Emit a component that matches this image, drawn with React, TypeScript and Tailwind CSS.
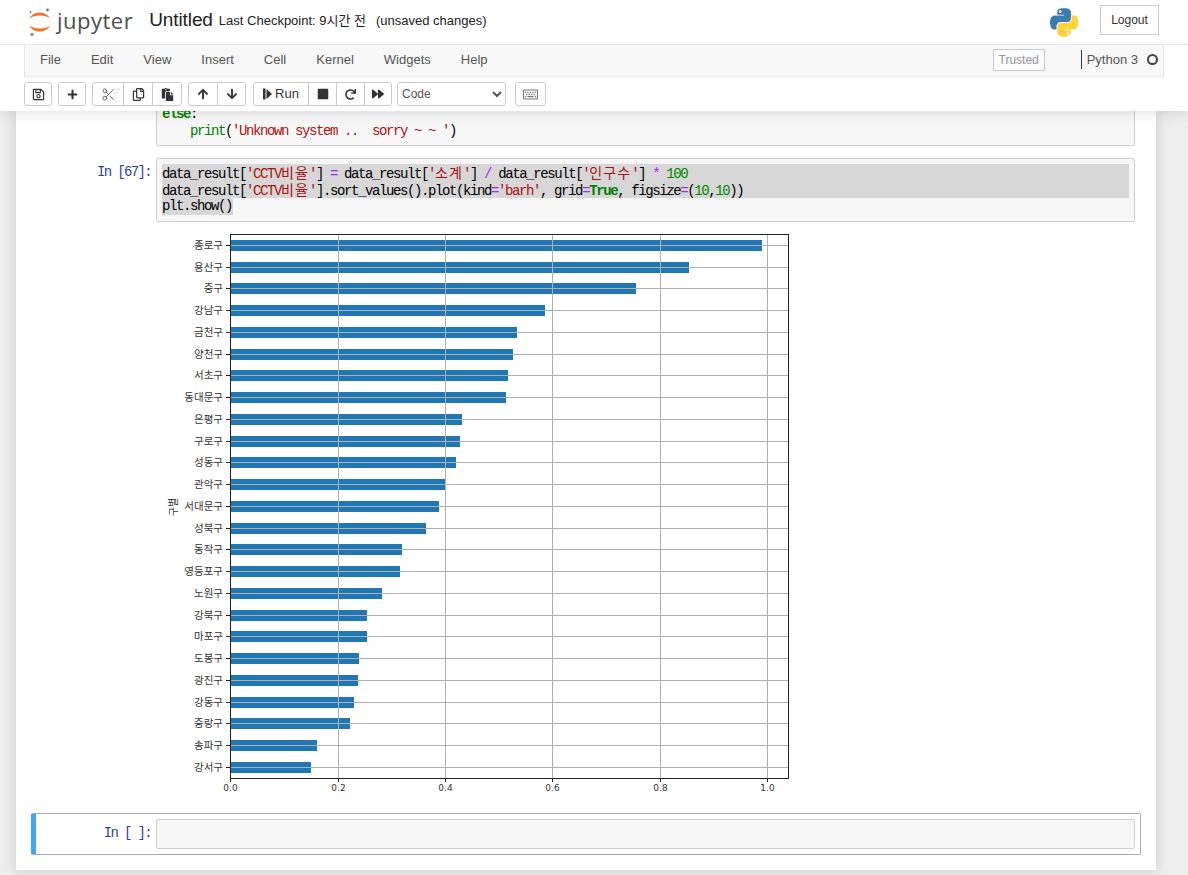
import type { ReactNode } from "react";
import { Scissors } from "lucide-react";
import {
  FaArrowDown,
  FaArrowUp,
  FaForward,
  FaPaste,
  FaPlus,
  FaRedo,
  FaRegCopy,
  FaRegKeyboard,
  FaRegSave,
  FaStop,
} from "react-icons/fa";

const menus = ["File", "Edit", "View", "Insert", "Cell", "Kernel", "Widgets", "Help"];

const bars: [string, number][] = [
  ["종로구", 762],
  ["용산구", 689],
  ["중구", 636],
  ["강남구", 545],
  ["금천구", 517],
  ["양천구", 513],
  ["서초구", 508],
  ["동대문구", 506],
  ["은평구", 462],
  ["구로구", 460],
  ["성동구", 456],
  ["관악구", 446],
  ["서대문구", 439],
  ["성북구", 426],
  ["동작구", 402],
  ["영등포구", 400],
  ["노원구", 382],
  ["강북구", 367],
  ["마포구", 367],
  ["도봉구", 359],
  ["광진구", 358],
  ["강동구", 354],
  ["중랑구", 350],
  ["송파구", 317],
  ["강서구", 311],
];

const xTicks: [string, number][] = [
  ["0.0", 230],
  ["0.2", 338],
  ["0.4", 445],
  ["0.6", 552],
  ["0.8", 660],
  ["1.0", 767],
];

const Ko = ({ children }: { children: ReactNode }) => (
  <span className="text-[14px] tracking-[1.1px] font-['Noto_Sans_CJK_KR',sans-serif]">{children}</span>
);
const Str = ({ children }: { children: ReactNode }) => <span className="text-[#aa1111]">{children}</span>;
const Op = ({ children }: { children: ReactNode }) => <span className="text-[#aa22ff]">{children}</span>;
const Num = ({ children }: { children: ReactNode }) => <span className="text-[#008800]">{children}</span>;

const Btn = ({ children, className = "" }: { children: ReactNode; className?: string }) => (
  <div
    className={`h-full flex items-center justify-center border-l border-[#cccccc] first:border-l-0 text-[#333333] ${className}`}
  >
    {children}
  </div>
);

const Group = ({ children, className = "" }: { children: ReactNode; className?: string }) => (
  <div className={`flex h-[24px] bg-white border border-[#cccccc] rounded-[3px] ${className}`}>{children}</div>
);

const JupyterLogo = () => (
  <svg width="24" height="30" viewBox="0 0 24 30" className="block">
    <path d="M1.5 11.5 C5 3.5 18 3.5 22 11.5 C18 7.5 6 7.5 1.5 11.5 Z" fill="#f37726" />
    <path d="M1.5 18.5 C5 26.5 18 26.5 22 18.5 C18 22.5 6 22.5 1.5 18.5 Z" fill="#f37726" />
    <circle cx="19.5" cy="3" r="1.4" fill="#767677" />
    <circle cx="2.5" cy="5" r="0.9" fill="#767677" />
    <circle cx="4" cy="27.5" r="1.8" fill="#989798" />
  </svg>
);

const PythonLogo = () => (
  <svg width="28" height="29" viewBox="0 0 110 112" className="block">
    <path
      fill="#3b7bb0"
      d="M54.919 0.001c-4.584.022-8.961.413-12.813 1.095C30.76 3.099 28.7 7.295 28.7 15.032v10.219h26.813v3.406H18.638c-7.793 0-14.616 4.684-16.75 13.594-2.462 10.213-2.571 16.586 0 27.25 1.906 7.938 6.457 13.594 14.25 13.594h9.219v-12.25c0-8.85 7.657-16.656 16.75-16.656h26.781c7.454 0 13.406-6.138 13.406-13.625V15.032c0-7.266-6.13-12.725-13.406-13.937C64.282.328 59.502-.02 54.918.001zM40.419 8.22c2.77 0 5.031 2.299 5.031 5.125 0 2.816-2.262 5.094-5.031 5.094-2.78 0-5.031-2.278-5.031-5.094 0-2.826 2.252-5.125 5.031-5.125z"
    />
    <path
      fill="#ffd43b"
      d="M85.638 28.657v11.906c0 9.231-7.826 17-16.75 17H42.106c-7.336 0-13.406 6.278-13.406 13.625v25.531c0 7.266 6.319 11.54 13.406 13.625 8.487 2.496 16.626 2.947 26.781 0 6.75-1.954 13.406-5.888 13.406-13.625V86.501H55.513v-3.406h40.188c7.793 0 10.696-5.436 13.406-13.594 2.799-8.399 2.68-16.476 0-27.25-1.926-7.757-5.604-13.594-13.406-13.594zM70.575 93.313c2.78 0 5.031 2.278 5.031 5.094 0 2.826-2.252 5.125-5.031 5.125-2.77 0-5.031-2.299-5.031-5.125 0-2.816 2.262-5.094 5.031-5.094z"
    />
  </svg>
);

const StepIcon = () => (
  <svg width="9" height="12" viewBox="0 0 9 12" className="block">
    <rect x="0" y="0.5" width="2.5" height="11" fill="#333333" />
    <path d="M3.5 1 L9 6 L3.5 11 Z" fill="#333333" />
  </svg>
);

const Chart = () => (
  <svg width="640" height="585" viewBox="156 222 640 585" className="block">
    {bars.map(([name, end], i) => {
      const y = Math.round(245 + i * 21.74);
      return (
        <g key={name}>
          <rect x="230" y={y - 5} width={end - 230} height="11" fill="#1f77b4" />
          <line x1="226" x2="788" y1={y + 0.5} y2={y + 0.5} stroke="#b0b0b0" strokeWidth="1" />
          <line x1="226" x2="230" y1={y + 0.5} y2={y + 0.5} stroke="#222222" strokeWidth="1" />
          <text
            x="223"
            y={y + 4}
            textAnchor="end"
            fontSize="10.5"
            fill="#333333"
            fontFamily="'Noto Sans CJK KR', sans-serif"
          >
            {name}
          </text>
        </g>
      );
    })}
    {xTicks.map(([label, x]) => (
      <g key={label}>
        <line x1={x + 0.5} x2={x + 0.5} y1="234" y2="778" stroke="#b0b0b0" strokeWidth="1" />
        <line x1={x + 0.5} x2={x + 0.5} y1="778" y2="782" stroke="#222222" strokeWidth="1" />
        <text
          x={x + 0.5}
          y="791"
          textAnchor="middle"
          fontSize="9"
          fill="#333333"
          fontFamily="'DejaVu Sans', sans-serif"
        >
          {label}
        </text>
      </g>
    ))}
    <rect x="230.5" y="234.5" width="558" height="544" fill="none" stroke="#222222" strokeWidth="1" />
    <text
      x="177"
      y="507"
      textAnchor="middle"
      fontSize="10"
      fill="#333333"
      transform="rotate(-90 177 507)"
      fontFamily="'Noto Sans CJK KR', sans-serif"
    >
      구별
    </text>
  </svg>
);

const Prompt = ({ children }: { children: ReactNode }) => (
  <div className="w-[120px] shrink-0 pr-[5px] pt-[6px] text-right text-[#303f9f] text-[14px] leading-[17px] tracking-[-1.65px] font-['Liberation_Mono',monospace] whitespace-pre">
    {children}
  </div>
);

const InputBox = ({ children, className = "" }: { children?: ReactNode; className?: string }) => (
  <div
    className={`flex-1 min-w-0 bg-[#f7f7f7] border border-[#cfcfcf] rounded-[2px] px-[5px] pt-[5px] text-[14px] leading-[16px] tracking-[-1.4px] text-black font-['Liberation_Mono',monospace] whitespace-pre ${className}`}
  >
    {children}
  </div>
);

const Line = ({ children, selected = false, wide = true }: { children: ReactNode; selected?: boolean; wide?: boolean }) => (
  <div className={`h-[17px] ${selected ? (wide ? "bg-[#d7d7d7]" : "bg-[#d7d7d7] w-fit pr-[1px]") : ""}`}>{children}</div>
);

export default function App() {
  return (
    <div className="h-[875px] w-[1188px] overflow-hidden flex flex-col bg-[#eeeeee] font-['Liberation_Sans',sans-serif] text-[#333333]">
      <header className="relative z-10 h-[111px] shrink-0 bg-white shadow-[0_0_12px_1px_rgba(87,87,87,0.2)]">
        <div className="h-[45px] border-b border-[#e7e7e7] flex items-center pl-[28px] pr-[29px]">
          <JupyterLogo />
          <span className="ml-[5px] mb-[5px] text-[22px] leading-none tracking-[0.5px] text-[#4e4e4e] font-['Open_Sans',sans-serif]">
            jupyter
          </span>
          <span className="ml-[16px] mb-[4px] text-[19px] text-[#222222] tracking-[-0.1px]">Untitled</span>
          <span className="ml-[6px] mb-[3px] text-[13px] text-[#222222] whitespace-pre font-['Liberation_Sans','Noto_Sans_CJK_KR',sans-serif]">
            Last Checkpoint: 9시간 전
          </span>
          <span className="ml-[10px] mb-[3px] text-[13px] text-[#222222]">(unsaved changes)</span>
          <div className="ml-auto flex items-center">
            <PythonLogo />
            <button className="ml-[22px] w-[59px] h-[30px] border border-[#cccccc] bg-white text-[12px] text-[#333333] mt-[-4px]">
              Logout
            </button>
          </div>
        </div>
        <div className="mx-[24px] h-[32px] bg-[#f8f8f8] border-x border-b border-[#e7e7e7] flex items-center pr-[5px] pb-[2px]">
          {menus.map((m) => (
            <span key={m} className="px-[15px] text-[13px] text-[#555555]">
              {m}
            </span>
          ))}
          <div className="ml-auto flex items-center">
            <span className="w-[52px] h-[22px] mr-[36px] border border-[#cccccc] bg-white/40 text-[12px] text-[#999999] flex items-center justify-center">
              Trusted
            </span>
            <span className="h-[19px] border-l border-[#333333] pl-[5px] text-[13px] leading-[19px] text-[#555555]">
              Python 3
            </span>
            <span className="ml-[9px] w-[11px] h-[11px] rounded-full border-2 border-[#444444]" />
          </div>
        </div>
        <div className="pl-[24px] pt-[5px] flex items-center text-[13px]">
          <Group>
            <Btn className="w-[26px]">
              <FaRegSave size={13} />
            </Btn>
          </Group>
          <Group className="ml-[6px]">
            <Btn className="w-[26px]">
              <FaPlus size={11} />
            </Btn>
          </Group>
          <Group className="ml-[6px]">
            <Btn className="w-[30px]">
              <Scissors size={15} strokeWidth={1.5} className="text-[#666666]" />
            </Btn>
            <Btn className="w-[29px]">
              <FaRegCopy size={13} />
            </Btn>
            <Btn className="w-[29px]">
              <FaPaste size={13} />
            </Btn>
          </Group>
          <Group className="ml-[6px]">
            <Btn className="w-[28px]">
              <FaArrowUp size={12} />
            </Btn>
            <Btn className="w-[28px]">
              <FaArrowDown size={12} />
            </Btn>
          </Group>
          <Group className="ml-[7px]">
            <Btn className="w-[54px] gap-[3px]">
              <StepIcon />
              <span className="text-[13px]">Run</span>
            </Btn>
            <Btn className="w-[28px]">
              <FaStop size={12} />
            </Btn>
            <Btn className="w-[28px]">
              <FaRedo size={11} />
            </Btn>
            <Btn className="w-[27px]">
              <FaForward size={12} />
            </Btn>
          </Group>
          <select
            defaultValue="Code"
            className="ml-[5px] w-[109px] h-[24px] bg-white border border-[#cccccc] rounded-[3px] text-[12px] text-[#555555]"
          >
            <option>Code</option>
          </select>
          <Group className="ml-[9px]">
            <Btn className="w-[29px]">
              <FaRegKeyboard size={15} className="text-[#777777]" />
            </Btn>
          </Group>
        </div>
      </header>

      <main className="flex-1 min-h-0 overflow-hidden">
        <div className="ml-[16px] w-[1140px] h-[759px] bg-white shadow-[0_0_12px_1px_rgba(87,87,87,0.2)] pl-[15px] flex flex-col">
          <div className="w-[1110px] mt-[-17px] border border-l-[5px] border-transparent pr-[5px] pt-[5px] pb-[5px] flex">
            <div className="w-[120px] shrink-0" />
            <InputBox className="pb-[5px]">
              <Line>
                <span className="text-[#008000] font-bold">else</span>:
              </Line>
              <Line>
                {"    "}
                <span className="text-[#008000]">print</span>(<Str>'Unknown system ..  sorry ~ ~ '</Str>)
              </Line>
            </InputBox>
          </div>

          <div className="w-[1110px] border border-l-[5px] border-transparent pr-[5px] pt-[5px] pb-[5px]">
            <div className="flex">
              <Prompt>In [67]:</Prompt>
              <InputBox className="pb-[6px]">
                <Line selected>
                  data_result[
                  <Str>
                    'CCTV<Ko>비율</Ko>'
                  </Str>
                  ] <Op>=</Op> data_result[
                  <Str>
                    '<Ko>소계</Ko>'
                  </Str>
                  ] <Op>/</Op> data_result[
                  <Str>
                    '<Ko>인구수</Ko>'
                  </Str>
                  ] <Op>*</Op> <Num>100</Num>
                </Line>
                <Line selected>
                  data_result[
                  <Str>
                    'CCTV<Ko>비율</Ko>'
                  </Str>
                  ].sort_values().plot(kind<Op>=</Op>
                  <Str>'barh'</Str>, grid<Op>=</Op>
                  <span className="text-[#008000] font-bold">True</span>, figsize<Op>=</Op>(<Num>10</Num>,<Num>10</Num>))
                </Line>
                <Line selected wide={false}>
                  plt.show()
                </Line>
              </InputBox>
            </div>
            <div className="ml-[120px]">
              <Chart />
            </div>
          </div>

          <div className="w-[1110px] h-[42px] border border-l-[5px] border-[#ababab] border-l-[#42a5f5] rounded-[2px] pr-[5px] pt-[5px] flex">
            <Prompt>In [ ]:</Prompt>
            <InputBox className="h-[30px]" />
          </div>
        </div>
      </main>
    </div>
  );
}
